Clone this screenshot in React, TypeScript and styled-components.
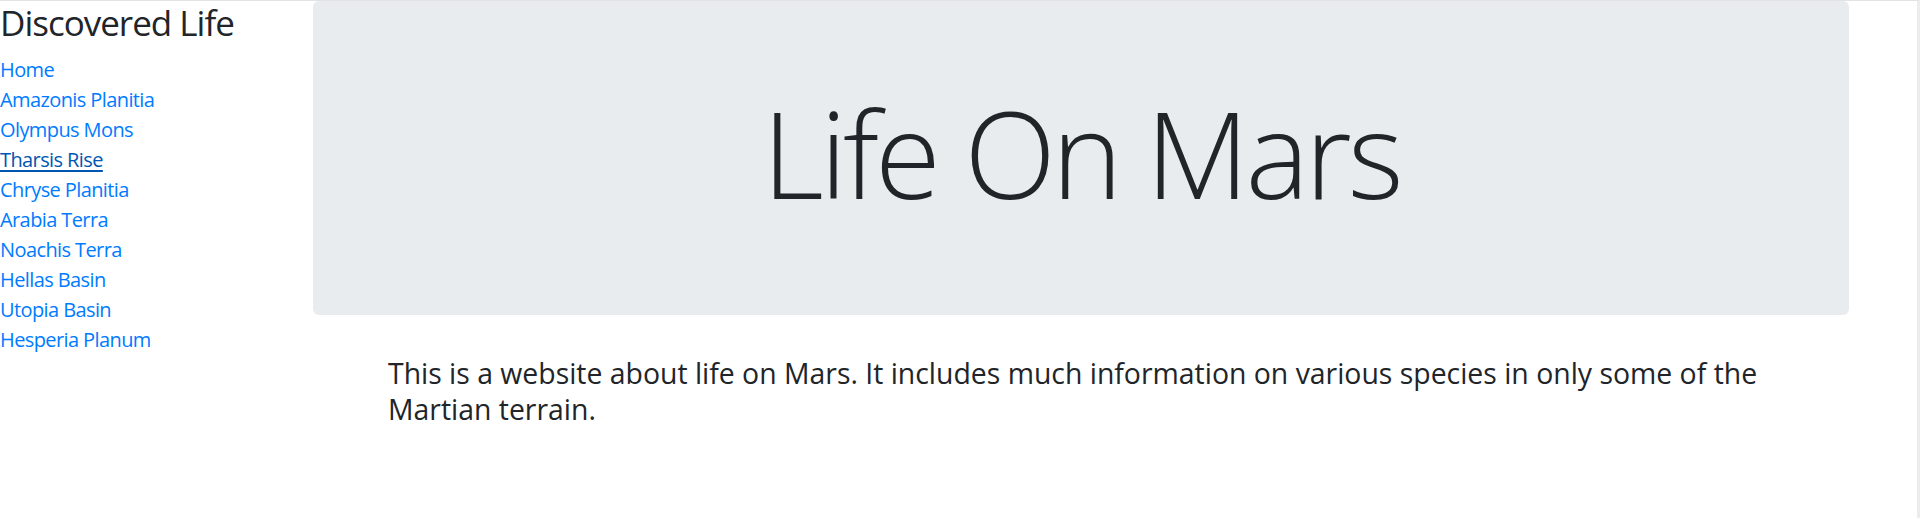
import styled, { createGlobalStyle } from "styled-components"

const GlobalStyle = createGlobalStyle`
html, body {
  margin: 0;
  padding: 0;
  background: #fff;
}
body {
  font-family: "Open Sans", "Noto Sans", sans-serif;
  color: #212529;
  border-top: 1px solid #e3e3e3;
  border-right: 3px solid #ececec;
  min-height: 517px;
}
`

const Page = styled.div`
display: flex;
align-items: flex-start;
`

const Sidebar = styled.nav`
flex: 0 0 313px;
`

const Brand = styled.h3`
margin: 0 0 11px;
padding-top: 1px;
font-size: 35px;
line-height: 42px;
font-weight: 400;
letter-spacing: -1px;
`

const NavLink = styled.a<{ $active?: boolean }>`
display: block;
font-size: 20px;
line-height: 30px;
letter-spacing: -0.6px;
color: ${(p) => (p.$active ? "#0056b3" : "#007bff")};
text-decoration: ${(p) => (p.$active ? "underline" : "none")};
text-underline-offset: 3px;
`

const Main = styled.main`
width: 1536px;
`

const Jumbotron = styled.header`
background: #e9ecef;
border-radius: 6px;
padding: 80px 40px;
margin-bottom: 40px;
text-align: center;
`

const Title = styled.h1`
margin: 0 0 10px;
font-size: 120px;
line-height: 144px;
font-weight: 300;
letter-spacing: -4px;
`

const Intro = styled.p`
margin: 0;
padding-left: 75px;
width: 1400px;
font-size: 28.4px;
line-height: 36px;
`

const places = [
  "Home",
  "Amazonis Planitia",
  "Olympus Mons",
  "Tharsis Rise",
  "Chryse Planitia",
  "Arabia Terra",
  "Noachis Terra",
  "Hellas Basin",
  "Utopia Basin",
  "Hesperia Planum",
]

export default function App() {
  return (
    <>
      <GlobalStyle />
      <Page>
        <Sidebar>
          <Brand>Discovered Life</Brand>
          {places.map((p) => (
            <NavLink key={p} href="#" $active={p === "Tharsis Rise"}>
              {p}
            </NavLink>
          ))}
        </Sidebar>
        <Main>
          <Jumbotron>
            <Title>Life On Mars</Title>
          </Jumbotron>
          <Intro>
            This is a website about life on Mars. It includes much information on various
            species in only some of the Martian terrain.
          </Intro>
        </Main>
      </Page>
    </>
  )
}
